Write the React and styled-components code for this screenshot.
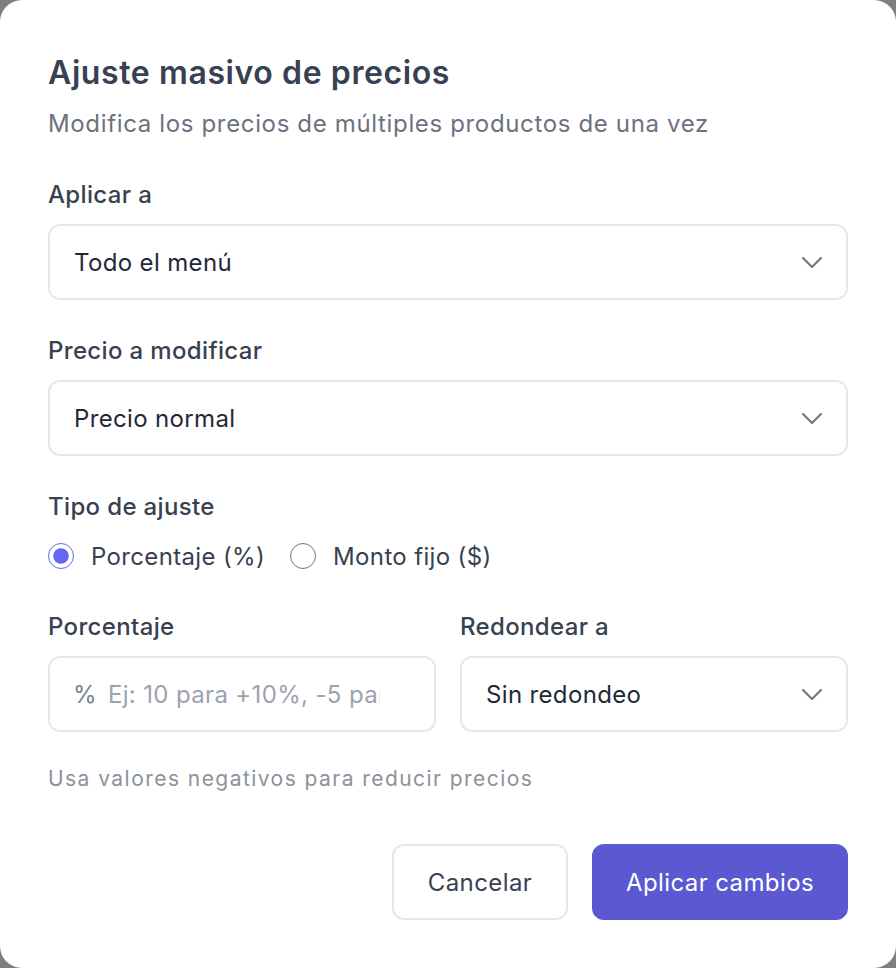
import React, { useState } from 'react'
import styled, { createGlobalStyle } from 'styled-components'

const GlobalStyle = createGlobalStyle`
  html, body {
    margin: 0;
    padding: 0;
    background-color: #7f7f7f;
  }
  * {
    box-sizing: border-box;
  }
`

const Dialog = styled.div`
  width: 896px;
  height: 968px;
  background-color: #ffffff;
  border-radius: 22px;
  padding: 53px 48px 48px;
  display: flex;
  flex-direction: column;
  font-family: Inter, "Noto Sans", sans-serif;
  color: #374151;
  letter-spacing: 0.35px;
`

const Title = styled.h2`
  margin: 0;
  font-size: 32px;
  line-height: 40px;
  font-weight: 600;
  color: #374151;
  letter-spacing: 0.6px;
`

const Subtitle = styled.p`
  margin: 15px 0 0;
  font-size: 24px;
  line-height: 32px;
  color: #6b7280;
  letter-spacing: 0.65px;
`

const Field = styled.div`
  display: flex;
  flex-direction: column;
  gap: 13px;
  margin-top: ${p => p.$top || 0}px;
`

const Label = styled.label`
  font-size: 24px;
  line-height: 32px;
  font-weight: 500;
  color: #374151;
`

const SelectBox = styled.div`
  height: 76px;
  border: 2px solid #e5e7eb;
  border-radius: 12px;
  display: flex;
  align-items: center;
  justify-content: space-between;
  padding: 0 22px 0 24px;
  font-size: 24px;
  color: #1f2937;
`

const Chevron = () => (
  <svg width="24" height="24" viewBox="0 0 24 24" fill="none" stroke="#6b7280" strokeWidth="2" strokeLinecap="round" strokeLinejoin="round">
    <path d="M3 8l9 9 9-9" />
  </svg>
)

const RadioRow = styled.div`
  display: flex;
  align-items: center;
  height: 32px;
  gap: 25px;
  margin-top: 4px;
`

const RadioOption = styled.label`
  display: flex;
  align-items: center;
  gap: 17px;
  font-size: 24px;
  color: #374151;
  cursor: pointer;
`

const Radio = styled.input`
  margin: 0;
  width: 26px;
  height: 26px;
  accent-color: #6466f6;
`

const Columns = styled.div`
  display: grid;
  grid-template-columns: minmax(0, 1fr) minmax(0, 1fr);
  gap: 24px;
  margin-top: 39px;
`

const InputBox = styled.div`
  height: 76px;
  border: 2px solid #e5e7eb;
  border-radius: 12px;
  display: flex;
  align-items: center;
  padding: 0 54px 0 23px;
  gap: 11px;
`

const Prefix = styled.span`
  font-size: 24px;
  color: #7b818c;
`

const Input = styled.input`
  flex: 1;
  min-width: 0;
  border: none;
  outline: none;
  background: transparent;
  font-family: inherit;
  font-size: 24px;
  letter-spacing: 0.35px;
  color: #1f2937;
  padding: 0;
  &::placeholder {
    color: #9ca3af;
  }
`

const Hint = styled.p`
  margin: 33px 0 0;
  font-size: 21px;
  line-height: 28px;
  color: #8b929c;
  letter-spacing: 1.45px;
`

const Footer = styled.div`
  display: flex;
  justify-content: flex-end;
  gap: 24px;
  margin-top: 51px;
`

const Button = styled.button`
  height: 76px;
  width: ${p => (p.$primary ? 256 : 176)}px;
  padding: 0;
  border-radius: 12px;
  font-family: inherit;
  font-size: 24px;
  letter-spacing: 0.4px;
  cursor: pointer;
  border: 2px solid ${p => (p.$primary ? '#5a59d2' : '#e5e7eb')};
  background-color: ${p => (p.$primary ? '#5a59d2' : '#ffffff')};
  color: ${p => (p.$primary ? '#ffffff' : '#374151')};
`

function App() {
  const [tipo, setTipo] = useState('porcentaje')

  return (
    <>
      <GlobalStyle />
      <Dialog>
        <Title>Ajuste masivo de precios</Title>
        <Subtitle>Modifica los precios de múltiples productos de una vez</Subtitle>

        <Field $top={39}>
          <Label>Aplicar a</Label>
          <SelectBox>
            <span>Todo el menú</span>
            <Chevron />
          </SelectBox>
        </Field>

        <Field $top={35}>
          <Label>Precio a modificar</Label>
          <SelectBox>
            <span>Precio normal</span>
            <Chevron />
          </SelectBox>
        </Field>

        <Field $top={35}>
          <Label>Tipo de ajuste</Label>
          <RadioRow>
            <RadioOption>
              <Radio type="radio" name="tipo" checked={tipo === 'porcentaje'} onChange={() => setTipo('porcentaje')} />
              Porcentaje (%)
            </RadioOption>
            <RadioOption>
              <Radio type="radio" name="tipo" checked={tipo === 'fijo'} onChange={() => setTipo('fijo')} />
              Monto fijo ($)
            </RadioOption>
          </RadioRow>
        </Field>

        <Columns>
          <Field>
            <Label>Porcentaje</Label>
            <InputBox>
              <Prefix>%</Prefix>
              <Input type="text" placeholder="Ej: 10 para +10%, -5 para -5%" />
            </InputBox>
          </Field>
          <Field>
            <Label>Redondear a</Label>
            <SelectBox>
              <span>Sin redondeo</span>
              <Chevron />
            </SelectBox>
          </Field>
        </Columns>

        <Hint>Usa valores negativos para reducir precios</Hint>

        <Footer>
          <Button>Cancelar</Button>
          <Button $primary>Aplicar cambios</Button>
        </Footer>
      </Dialog>
    </>
  )
}

export default App
